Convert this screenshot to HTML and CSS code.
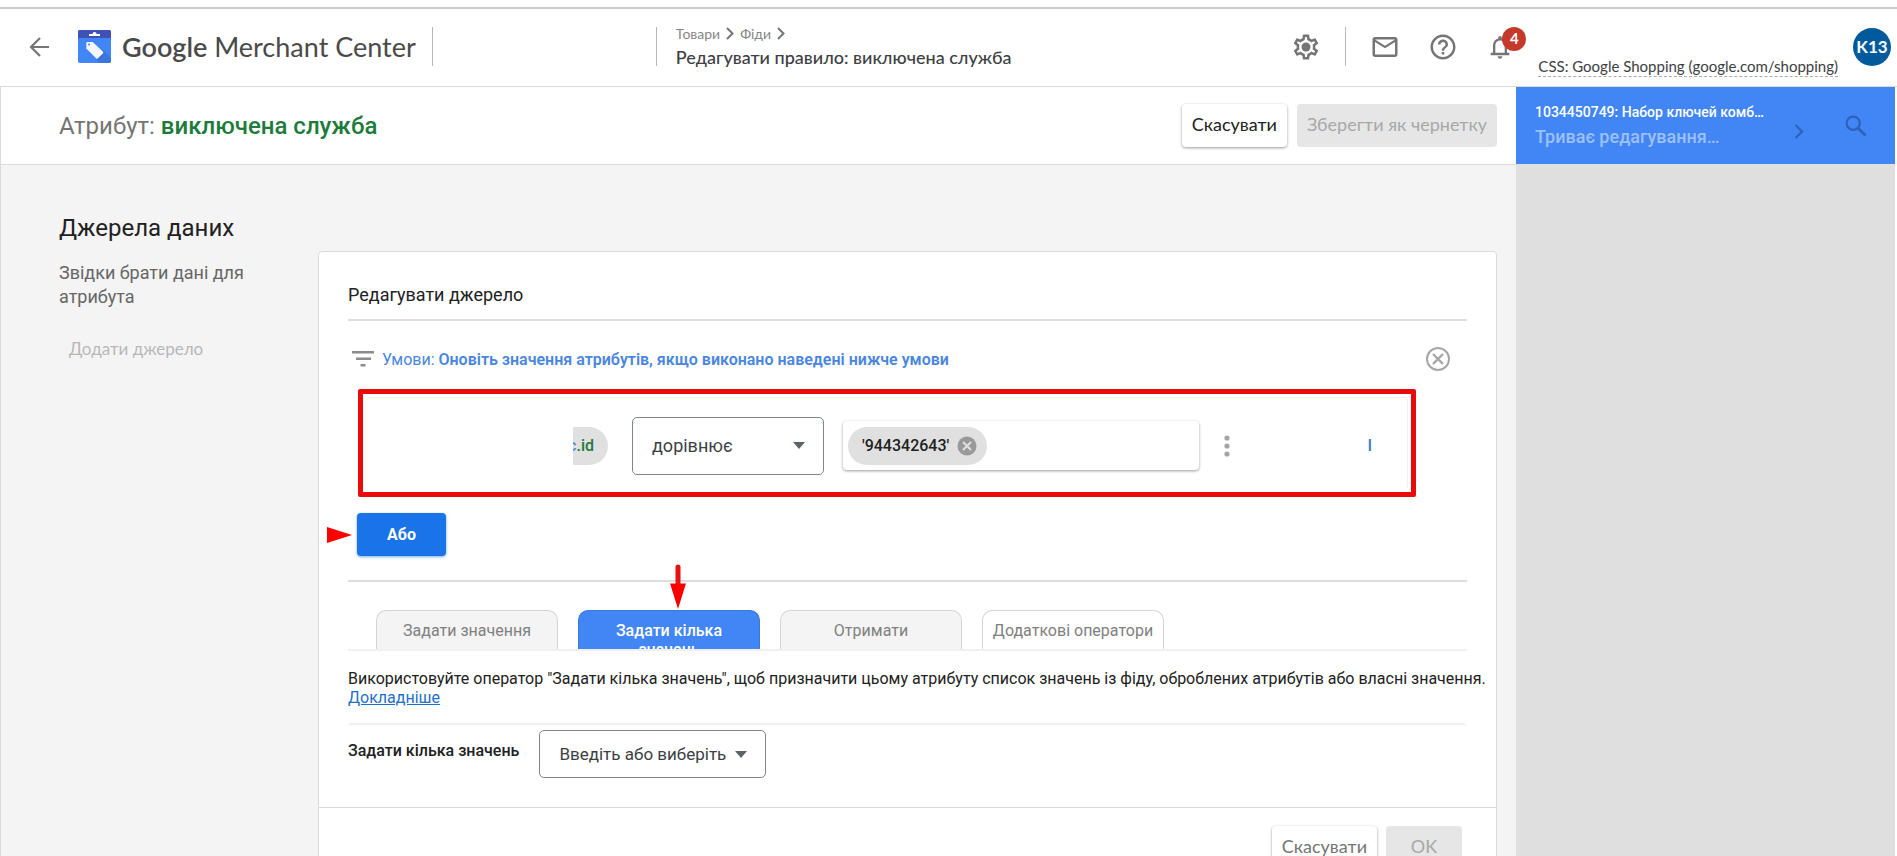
FILE: index.html
```html
<!DOCTYPE html>
<html lang="uk">
<head>
<meta charset="utf-8">
<meta name="viewport" content="width=device-width, initial-scale=1">
<title>Google Merchant Center</title>
<link rel="stylesheet" href="styles.css">
</head>
<body>
<div class="app">
  <header class="topbar">
    <button class="icon-btn back" type="button" aria-label="Назад">
      <svg width="20" height="20" viewBox="0 0 20 20" fill="none" stroke="currentColor" stroke-width="2.200"><path d="M20 10H2M11 1L2 10l9 9"/></svg>
    </button>
    <a class="brand" href="#">
      <svg width="33" height="33" viewBox="0 0 33 33"><rect width="33" height="33" rx="2" fill="#4285f4"/><path d="M0 8V2a2 2 0 0 1 2-2h29a2 2 0 0 1 2 2v6z" fill="#3f51b5"/><path d="M11 4h3.500a2 2 0 0 1 4 0H22V6H11z" fill="#fff"/><path d="M25 20l8 8v3a2 2 0 0 1-2 2H21l-3-4z" fill="#3a76dd"/><path d="M9.500 12h5.200L25 21.800a1 1 0 0 1 0 1.400l-5.300 5.300a1 1 0 0 1-1.400 0L8.300 18.600V13.200a1.200 1.200 0 0 1 1.200-1.200z" fill="#f5f7fb"/><circle cx="11" cy="14.500" r="1" fill="#4285f4"/></svg>
      <span class="brand-name"><b>Google</b> Merchant Center</span>
    </a>
    <span class="divider account-start"></span>
    <span class="divider"></span>
    <div class="heading">
      <nav class="crumbs" aria-label="Навігація">
        <a href="#">Товари</a>
        <svg width="8" height="13" viewBox="0 0 8 13" fill="none" stroke="currentColor" stroke-width="2"><path d="M1 1l5.500 5.500L1 12"/></svg>
        <a href="#">Фіди</a>
        <svg width="8" height="13" viewBox="0 0 8 13" fill="none" stroke="currentColor" stroke-width="2"><path d="M1 1l5.500 5.500L1 12"/></svg>
      </nav>
      <h1 class="page-title">Редагувати правило: виключена служба</h1>
    </div>
    <div class="tools">
      <button class="icon-btn" type="button" aria-label="Налаштування">
        <svg width="30" height="30" viewBox="0 0 24 24" fill="currentColor"><path d="M19.430 12.980c.04-.32.07-.64.07-.98s-.03-.66-.07-.98l2.110-1.650c.19-.15.24-.42.12-.64l-2-3.460c-.09-.16-.26-.25-.44-.25-.06 0-.12.010-.17.030l-2.490 1c-.52-.4-1.080-.73-1.690-.98l-.38-2.650C14.460 2.180 14.250 2 14 2h-4c-.25 0-.46.180-.49.420l-.38 2.650c-.61.250-1.170.590-1.690.980l-2.490-1c-.06-.02-.12-.03-.18-.03-.17 0-.34.090-.43.250l-2 3.460c-.13.220-.07.490.12.640l2.110 1.650c-.04.320-.07.650-.07.980s.03.660.07.980l-2.110 1.650c-.19.150-.24.420-.12.640l2 3.460c.09.160.26.250.44.250.06 0 .12-.01.170-.03l2.490-1c.52.400 1.080.730 1.690.980l.38 2.650c.03.240.24.420.49.420h4c.25 0 .46-.18.490-.42l.38-2.650c.61-.25 1.170-.59 1.690-.98l2.490 1c.06.020.12.030.18.030.17 0 .34-.09.430-.25l2-3.460c.12-.22.070-.49-.12-.64l-2.110-1.650zm-1.980-1.710c.04.310.05.520.05.730 0 .21-.02.430-.05.730l-.14 1.130.89.700 1.080.840-.7 1.210-1.270-.51-1.040-.42-.9.680c-.43.320-.84.560-1.250.730l-1.060.43-.16 1.130-.2 1.350h-1.400l-.19-1.350-.16-1.130-1.060-.43c-.43-.18-.83-.41-1.230-.71l-.91-.7-1.060.43-1.270.51-.7-1.210 1.080-.84.890-.7-.14-1.130c-.03-.31-.05-.54-.05-.74s.02-.43.050-.73l.14-1.130-.89-.7-1.080-.84.700-1.210 1.270.51 1.040.42.900-.68c.43-.32.840-.56 1.250-.73l1.060-.43.160-1.130.2-1.350h1.390l.19 1.350.16 1.130 1.060.43c.43.180.83.410 1.230.71l.91.700 1.060-.43 1.270-.51.700 1.210-1.070.85-.89.700.14 1.130z"/><circle cx="12" cy="12" r="3.600"/></svg>
      </button>
      <span class="divider"></span>
      <button class="icon-btn" type="button" aria-label="Пошта">
        <svg width="30" height="30" viewBox="0 0 24 24" fill="currentColor"><path d="M20 4H4c-1.100 0-2 .9-2 2v12c0 1.100.9 2 2 2h16c1.100 0 2-.9 2-2V6c0-1.100-.9-2-2-2zm0 14H4V8l8 5 8-5v10zm-8-7L4 6h16l-8 5z"/></svg>
      </button>
      <button class="icon-btn" type="button" aria-label="Довідка">
        <svg width="30" height="30" viewBox="0 0 24 24" fill="currentColor"><path d="M11 18h2v-2h-2v2zm1-16C6.480 2 2 6.480 2 12s4.480 10 10 10 10-4.480 10-10S17.520 2 12 2zm0 18c-4.410 0-8-3.590-8-8s3.590-8 8-8 8 3.590 8 8-3.590 8-8 8zm0-14c-2.210 0-4 1.790-4 4h2c0-1.100.9-2 2-2s2 .9 2 2c0 2-3 1.750-3 5h2c0-2.250 3-2.500 3-5 0-2.210-1.790-4-4-4z"/></svg>
      </button>
      <button class="icon-btn bell" type="button" aria-label="Сповіщення">
        <svg width="28" height="28" viewBox="0 0 24 24" fill="currentColor"><path d="M12 22c1.100 0 2-.9 2-2h-4c0 1.100.9 2 2 2zm6-5v-6c0-3.070-1.640-5.640-4.500-6.320V4c0-.83-.67-1.500-1.500-1.500s-1.500.67-1.500 1.500v.68C7.630 5.360 6 7.920 6 11v6H4v2h16v-2h-2zm-2 0H8v-6c0-2.480 1.510-4.500 4-4.500s4 2.020 4 4.500v6z"/></svg>
        <span class="badge">4</span>
      </button>
    </div>
    <a class="css-link" href="#">CSS: Google Shopping (google.com/shopping)</a>
    <button class="avatar" type="button">K13</button>
  </header>

  <div class="body">
    <main class="main">
      <div class="attribute-bar">
        <h2 class="attribute">Атрибут: <strong>виключена служба</strong></h2>
        <div class="actions">
          <button class="btn" type="button">Скасувати</button>
          <button class="btn btn-off" type="button" disabled>Зберегти як чернетку</button>
        </div>
      </div>

      <div class="workspace">
        <section class="intro">
          <h3 class="intro-title">Джерела даних</h3>
          <p class="intro-text">Звідки брати дані для атрибута</p>
          <button class="add-source" type="button" disabled>Додати джерело</button>
        </section>

        <section class="card">
          <div class="card-body">
            <h4 class="card-title">Редагувати джерело</h4>

            <div class="conditions">
              <svg width="22" height="16" viewBox="0 0 22 16" fill="#8c8c8c"><path d="M0 0h22v2.500H0zM4 6.500h15V9H4zM8.500 13h5v2.500h-5z"/></svg>
              <p class="conditions-text">Умови: <strong>Оновіть значення атрибутів, якщо виконано наведені нижче умови</strong></p>
              <button class="icon-btn close" type="button" aria-label="Закрити">
                <svg width="24" height="24" viewBox="0 0 24 24" fill="none" stroke="#a6a6a6" stroke-width="2"><circle cx="12" cy="12" r="11"/><path d="M7 7l10 10M17 7L7 17" stroke-width="2.400"/></svg>
              </button>
            </div>

            <div class="rule-frame">
              <div class="rule">
                <span class="source-chip"><span class="feed">c</span>.id</span>
                <select class="select operator" aria-label="Оператор"><option>дорівнює</option></select>
                <div class="value-field">
                  <span class="chip">'944342643'
                    <button class="icon-btn" type="button" aria-label="Видалити"><svg width="20" height="20" viewBox="0 0 20 20"><circle cx="10" cy="10" r="9.500" fill="#999"/><path d="M6 6l8 8M14 6l-8 8" stroke="#e0e0e0" stroke-width="2"/></svg></button>
                  </span>
                  <input class="value-input" type="text" aria-label="Значення">
                </div>
                <button class="icon-btn more" type="button" aria-label="Більше">
                  <svg width="6" height="22" viewBox="0 0 6 22" fill="#a6a6a6"><circle cx="3" cy="3" r="2.600"/><circle cx="3" cy="11" r="2.600"/><circle cx="3" cy="19" r="2.600"/></svg>
                </button>
                <button class="and" type="button">І</button>
              </div>
            </div>

            <div class="or-row">
              <svg class="pointer" width="25" height="16" viewBox="0 0 25 16"><path d="M0 0l25 8L0 16z" fill="#f00"/></svg>
              <button class="or-btn" type="button">Або</button>
            </div>

            <div class="tabs" role="tablist">
              <button class="tab" type="button" role="tab">Задати значення</button>
              <button class="tab tab-active" type="button" role="tab" aria-selected="true">Задати кілька значень</button>
              <button class="tab" type="button" role="tab">Отримати</button>
              <button class="tab tab-plain" type="button" role="tab">Додаткові оператори</button>
              <svg class="arrow" width="16" height="45" viewBox="0 0 16 45"><path d="M8 3v18" stroke="#e51010" stroke-width="5" stroke-linecap="round"/><path d="M0 19.500h16L8 45z" fill="#f80000"/></svg>
            </div>

            <p class="hint">Використовуйте оператор "Задати кілька значень", щоб призначити цьому атрибуту список значень із фіду, оброблених атрибутів або власні значення. <a href="#">Докладніше</a></p>

            <div class="values">
              <label class="values-label" for="values">Задати кілька значень</label>
              <select class="select picker" id="values"><option>Введіть або виберіть</option></select>
            </div>
          </div>
          <footer class="card-footer">
            <button class="btn btn-quiet" type="button">Скасувати</button>
            <button class="btn btn-off btn-ok" type="button" disabled>OK</button>
          </footer>
        </section>
      </div>
    </main>

    <aside class="preview">
      <div class="preview-head">
        <div class="preview-text">
          <div class="preview-title">1034450749: Набор ключей комб…</div>
          <div class="preview-status">Триває редагування…</div>
        </div>
        <button class="icon-btn next" type="button" aria-label="Далі">
          <svg width="10" height="15" viewBox="0 0 10 15" fill="none" stroke="currentColor" stroke-width="2.200"><path d="M1.500 1l6.500 6.500L1.500 14"/></svg>
        </button>
        <button class="icon-btn search" type="button" aria-label="Пошук">
          <svg width="22" height="22" viewBox="0 0 22 22" fill="none" stroke="currentColor"><circle cx="8.200" cy="8.200" r="6.600" stroke-width="2.200"/><path d="M13 13l7.500 7.500" stroke-width="2.800"/></svg>
        </button>
      </div>
    </aside>
  </div>
</div>
</body>
</html>
```
FILE: styles.css
```css
* {
  box-sizing: border-box;
}

body {
  margin: 0;
  background: #fff;
  color: #212121;
  font: 16px/19px Roboto, "Liberation Sans", sans-serif;
}

h1, h2, h3, h4, p {
  margin: 0;
  font-weight: 400;
}

button, select, input {
  font: inherit;
}

.app {
  display: flex;
  flex-direction: column;
  height: 100vh;
  padding-top: 7px;
  overflow: hidden;
}

.icon-btn {
  display: flex;
  padding: 0;
  border: 0;
  background: none;
  color: #757575;
}

/* Top bar */
.topbar {
  display: flex;
  flex: none;
  align-items: center;
  height: 80px;
  padding: 0 6px 2px 29px;
  border-top: 2px solid #ccc;
  border-bottom: 1px solid #dadada;
  font-family: Lato, "Open Sans", sans-serif;
}

.brand {
  display: flex;
  align-items: center;
  gap: 11px;
  margin-left: 29px;
  color: #4a4a4a;
  text-decoration: none;
}

.brand-name {
  font-size: 27px;
  line-height: 36px;
  white-space: nowrap;
}

.brand-name b {
  font-weight: 600;
}

.divider {
  width: 1px;
  height: 39px;
  background: #b8b8b8;
}

.account-start {
  margin: 0 223px 0 16px;
}

.heading {
  flex: 1;
  margin-left: 19px;
}

.crumbs {
  display: flex;
  align-items: center;
  gap: 6px;
  height: 20px;
  color: #757575;
  font-size: 14px;
}

.crumbs a {
  color: #868686;
  text-decoration: none;
}

.page-title {
  color: #3c4043;
  font-size: 18px;
  font-weight: 500;
  line-height: 26px;
}

.tools {
  display: flex;
  align-items: center;
  gap: 28px;
}

.tools .divider {
  margin: 0 -4px;
}

.bell {
  position: relative;
}

.badge {
  position: absolute;
  top: -6px;
  right: -12px;
  width: 24px;
  height: 24px;
  border-radius: 50%;
  background: #c5392a;
  color: #fff;
  font-size: 15px;
  font-weight: 700;
  line-height: 22px;
}

.css-link {
  align-self: flex-end;
  margin: 0 15px 7px 24px;
  border-bottom: 1px dashed #aaa;
  color: #3c4043;
  font-size: 15px;
  line-height: 20px;
  text-decoration: none;
}

.avatar {
  width: 38px;
  height: 38px;
  padding: 0;
  border: 0;
  border-radius: 50%;
  background: #005a9c;
  color: #fff;
  font-size: 17px;
  font-weight: 700;
}

/* Page body */
.body {
  display: flex;
  flex: 1;
  min-height: 0;
  padding-right: 2px;
  border-left: 1px solid #dadada;
}

.main {
  display: flex;
  flex: 1;
  flex-direction: column;
  min-width: 0;
  background: #f4f4f4;
}

.attribute-bar {
  display: flex;
  flex: none;
  align-items: center;
  justify-content: space-between;
  height: 78px;
  padding: 0 19px 0 58px;
  border-bottom: 1px solid #dadada;
  background: #fff;
}

.attribute {
  color: #757575;
  font-size: 24px;
  line-height: 32px;
}

.attribute strong {
  color: #1e7b3c;
  font-weight: 500;
}

.actions {
  display: flex;
  gap: 10px;
}

.btn {
  height: 43px;
  padding: 0 10px 2px;
  border: 0;
  border-radius: 4px;
  background: #fff;
  box-shadow: 0 1px 3px rgba(0, 0, 0, .4);
  color: #212121;
  font-family: Lato, "Open Sans", sans-serif;
  font-size: 18px;
}

.btn-off {
  background: #e6e6e6;
  box-shadow: none;
  color: #a8a8a8;
}

.workspace {
  display: flex;
  flex: 1;
  min-height: 0;
  padding: 47px 19px 0 58px;
}

.intro {
  width: 259px;
  padding-right: 50px;
}

.intro-title {
  font-size: 24px;
  line-height: 32px;
}

.intro-text {
  margin-top: 17px;
  color: #666;
  font-size: 18px;
  line-height: 24px;
}

.add-source {
  margin-top: 28px;
  padding: 0 10px;
  border: 0;
  background: none;
  color: #b8b8b8;
  font-family: Lato, "Open Sans", sans-serif;
  font-size: 17px;
  line-height: 24px;
}

/* Source card */
.card {
  flex: 1;
  align-self: flex-start;
  min-width: 0;
  margin-top: 39px;
  border: 1px solid #dadada;
  border-radius: 4px 4px 0 0;
  background: #fff;
}

.card-body {
  padding: 30px 29px 18px;
}

.card-title {
  padding-bottom: 11px;
  border-bottom: 2px solid #ddd;
  font-size: 18px;
  line-height: 26px;
}

.conditions {
  display: flex;
  align-items: center;
  gap: 8px;
  margin-top: 26px;
  padding: 0 17px 0 4px;
  color: #4a86e0;
}

.conditions-text {
  flex: 1;
}

.conditions strong {
  font-weight: 600;
}

.rule-frame {
  margin: 18px 51px 0 10px;
  padding: 3px;
  border: 5px solid #e90b0b;
  border-radius: 2px;
}

.rule {
  display: flex;
  align-items: center;
  height: 92px;
  padding: 4px 35px 0 207px;
  border: 1px solid #f4eeee;
  border-width: 1px 1px 0 0;
  border-radius: 4px;
}

.source-chip {
  display: flex;
  align-items: center;
  justify-content: flex-end;
  width: 35px;
  height: 38px;
  padding-right: 14px;
  overflow: hidden;
  border-radius: 0 19px 19px 0;
  background: #e0e0e0;
  color: #1e7b3c;
  font-weight: 500;
}

.feed {
  color: #4a86e0;
}

.select {
  appearance: none;
  border: 1px solid #80868b;
  border-radius: 5px;
  background: #fff url("data:image/svg+xml,%3Csvg xmlns='http://www.w3.org/2000/svg' width='12' height='7'%3E%3Cpath d='M0 0h12L6 7z' fill='%235f6368'/%3E%3C/svg%3E") no-repeat right 18px center;
  color: #3c4043;
}

.operator {
  width: 192px;
  height: 58px;
  margin-left: 24px;
  padding: 0 40px 0 19px;
  font-size: 18px;
}

.value-field {
  display: flex;
  flex: 0 1 354px;
  align-items: center;
  height: 49px;
  margin-left: 19px;
  padding: 0 5px;
  border-radius: 4px;
  box-shadow: 0 1px 3px rgba(0, 0, 0, .4);
}

.chip {
  display: flex;
  flex: none;
  align-items: center;
  gap: 8px;
  height: 38px;
  padding: 0 10px 0 14px;
  border-radius: 19px;
  background: #e0e0e0;
  font-weight: 500;
}

.value-input {
  flex: 1;
  min-width: 0;
  border: 0;
  outline: 0;
  background: none;
}

.more {
  margin-left: 25px;
}

.and {
  margin-left: auto;
  padding: 0;
  border: 0;
  background: none;
  color: #3b7bd4;
  font-weight: 500;
}

.or-row {
  display: flex;
  align-items: center;
  margin-left: -21px;
  padding: 16px 0 24px;
}

.or-btn {
  height: 43px;
  margin-left: 5px;
  padding: 0 30px;
  border: 0;
  border-radius: 4px;
  background: #1a73e8;
  box-shadow: 0 1px 3px rgba(26, 115, 232, .6);
  color: #fff;
  font-weight: 700;
}

/* Operator tabs */
.tabs {
  position: relative;
  display: flex;
  gap: 20px;
  height: 71px;
  padding: 28px 0 0 28px;
  border-top: 2px solid #ddd;
  border-bottom: 2px solid #f0f0f0;
}

.tab {
  display: flex;
  align-items: flex-start;
  justify-content: center;
  width: 182px;
  height: 39px;
  padding: 10px 8px 0;
  overflow: hidden;
  border: 1px solid #d4d4d4;
  border-bottom: 0;
  border-radius: 10px 10px 0 0;
  background: #f4f4f4;
  color: #808080;
}

.tab-active {
  padding: 10px 30px 0;
  border-color: #3b78dc;
  background: #4285f4;
  color: #fff;
  font-weight: 500;
}

.tab-plain {
  background: #fff;
  white-space: nowrap;
}

.arrow {
  position: absolute;
  top: -18px;
  left: 322px;
}

.hint {
  margin: 18px -20px 0 0;
}

.hint a {
  color: #1f6fc9;
}

.values {
  display: flex;
  align-items: flex-start;
  gap: 20px;
  height: 66px;
  margin-top: 16px;
  padding-top: 5px;
  border-top: 2px solid #f0f0f0;
  border-radius: 4px;
}

.values-label {
  padding-top: 11px;
  font-weight: 500;
}

.picker {
  height: 48px;
  padding: 0 39px 0 19px;
  font-size: 17px;
}

.card-footer {
  display: flex;
  justify-content: flex-end;
  gap: 9px;
  padding: 18px 34px 24px;
  border-top: 1px solid #dadada;
}

.btn-quiet {
  color: #757575;
}

.btn-ok {
  min-width: 76px;
}

/* Preview panel */
.preview {
  width: 379px;
  background: #dfdfdf;
}

.preview-head {
  display: flex;
  align-items: center;
  height: 77px;
  padding: 0 28px 0 19px;
  background: #4285f4;
}

.preview-text {
  flex: 1;
  color: #fff;
  font-weight: 500;
}

.preview-title {
  font-size: 14px;
}

.preview-status {
  margin-top: 3px;
  color: #9cc0f9;
  font-size: 18px;
  line-height: 24px;
}

.preview .icon-btn {
  color: #2c62ba;
}

.next {
  margin: 12px 41px 0 0;
}
```
